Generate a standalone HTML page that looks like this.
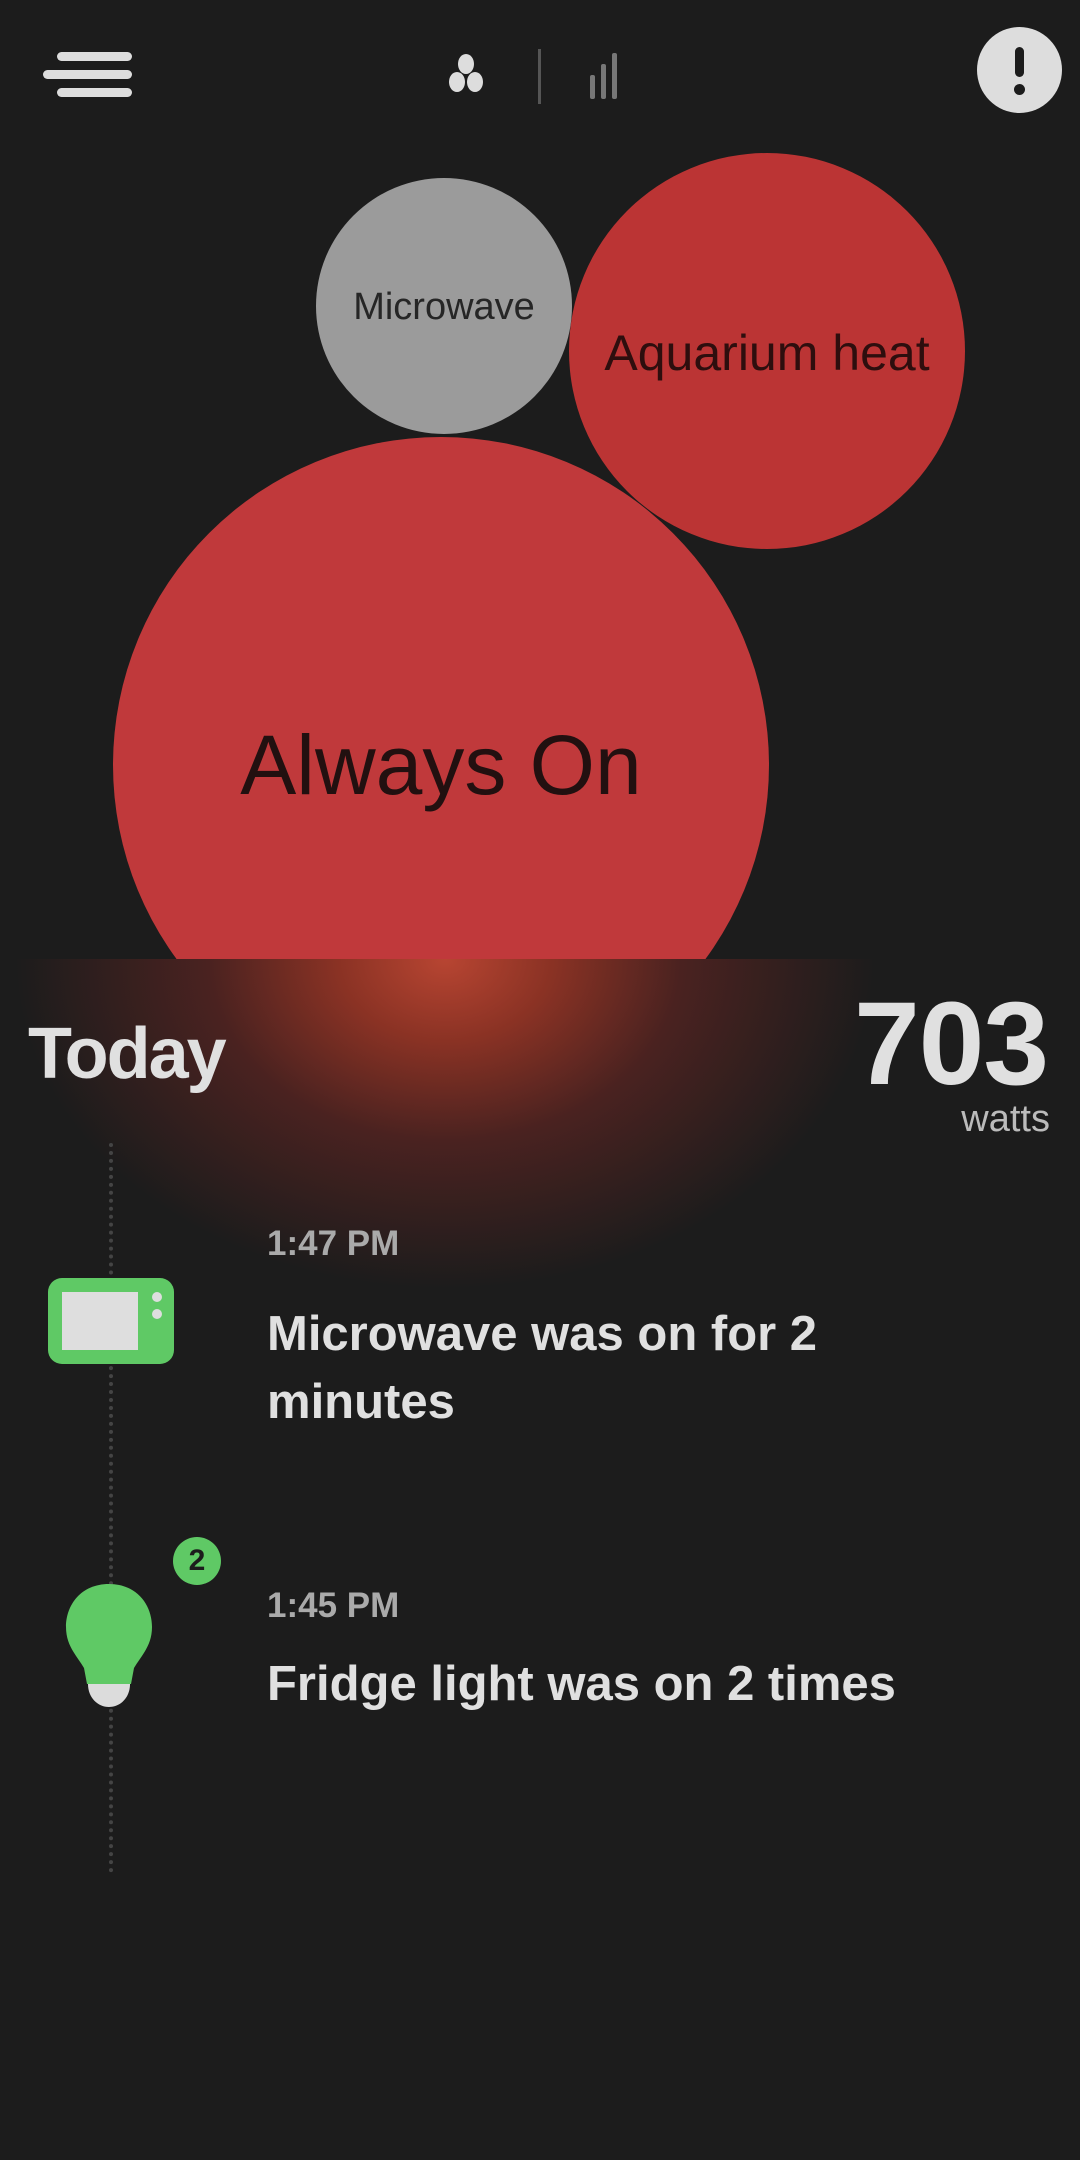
<!DOCTYPE html>
<html><head><meta charset="utf-8"><style>
html,body{margin:0;padding:0;background:#1c1c1c;}
body{width:1080px;height:2160px;position:relative;overflow:hidden;font-family:"Liberation Sans",sans-serif;}
.abs{position:absolute;}
.glow{left:0;top:959px;width:1080px;height:360px;background:radial-gradient(ellipse 430px 330px at 445px 0px,#b84532 0%,#8a3224 25%,#4a2220 55%,rgba(28,28,28,0) 100%);}
.t{color:#e0e0e0;white-space:nowrap;}
</style></head><body>
<div class="abs" style="left:57px;top:52px;width:75px;height:9px;background:#ddd;border-radius:5px"></div>
<div class="abs" style="left:43px;top:70px;width:89px;height:9px;background:#ddd;border-radius:5px"></div>
<div class="abs" style="left:57px;top:88px;width:75px;height:9px;background:#ddd;border-radius:5px"></div>
<svg class="abs" style="left:430px;top:40px" width="220" height="70">
 <ellipse cx="36" cy="24" rx="8" ry="10" fill="#ddd"/>
 <ellipse cx="27" cy="42" rx="8" ry="10" fill="#ddd"/>
 <ellipse cx="45" cy="42" rx="8" ry="10" fill="#ddd"/>
 <rect x="108" y="9" width="3" height="55" fill="#555"/>
 <rect x="160" y="35" width="5" height="24" rx="2" fill="#777"/>
 <rect x="171" y="24" width="5" height="35" rx="2" fill="#777"/>
 <rect x="182" y="13" width="5" height="46" rx="2" fill="#777"/>
</svg>
<div class="abs" style="left:977px;top:27px;width:85px;height:86px;border-radius:50%;background:#ddd"></div>
<div class="abs" style="left:1015px;top:47px;width:9px;height:30px;background:#1c1c1c;border-radius:5px"></div>
<div class="abs" style="left:1014px;top:84px;width:11px;height:11px;background:#1c1c1c;border-radius:50%"></div>
<div class="abs" style="left:316px;top:178px;width:256px;height:256px;border-radius:50%;background:#9b9b9b"></div>
<div class="abs t" style="left:316px;top:286px;width:256px;text-align:center;font-size:38px;color:#262626">Microwave</div>
<div class="abs" style="left:569px;top:153px;width:396px;height:396px;border-radius:50%;background:#bb3434"></div>
<div class="abs t" style="left:569px;top:324px;width:396px;text-align:center;font-size:50px;color:#2e0e0e">Aquarium heat</div>
<div class="abs" style="left:0;top:0;width:1080px;height:959px;overflow:hidden">
 <div class="abs" style="left:113px;top:437px;width:656px;height:656px;border-radius:50%;background:#c0393b"></div>
</div>
<div class="abs t" style="left:113px;top:717px;width:656px;text-align:center;font-size:84px;color:#221010">Always On</div>
<div class="abs glow"></div>
<div class="abs t" style="left:28px;top:1013px;font-size:72px;font-weight:bold;letter-spacing:-2px">Today</div>
<div class="abs t" style="right:32px;top:976px;font-size:118px;font-weight:bold;letter-spacing:-1px">703</div>
<div class="abs t" style="right:30px;top:1098px;font-size:38px;color:#bbb">watts</div>
<div class="abs" style="left:109px;top:1143px;width:0;height:730px;border-left:4px dotted #444"></div>
<div class="abs" style="left:48px;top:1275px;width:126px;height:90px;background:#1c1c1c"></div>
<div class="abs" style="left:48px;top:1278px;width:126px;height:86px;border-radius:14px;background:#5fc965"></div>
<div class="abs" style="left:62px;top:1292px;width:76px;height:58px;background:#dedede"></div>
<div class="abs" style="left:152px;top:1292px;width:10px;height:10px;border-radius:50%;background:#dedede"></div>
<div class="abs" style="left:152px;top:1309px;width:10px;height:10px;border-radius:50%;background:#dedede"></div>
<div class="abs t" style="left:267px;top:1224px;font-size:35px;color:#aaa;font-weight:bold">1:47 PM</div>
<div class="abs t" style="left:267px;top:1300px;font-size:49px;line-height:68px;font-weight:bold">Microwave was on for 2<br>minutes</div>
<div class="abs" style="left:173px;top:1537px;width:48px;height:48px;border-radius:50%;background:#5fc965;color:#1c1c1c;font-weight:bold;font-size:30px;text-align:center;line-height:48px">2</div>
<svg class="abs" style="left:60px;top:1580px" width="100" height="135">
 <path d="M49 4 C21 4 6 25 6 47 C6 66 17 76 24 88 L27 104 L71 104 L74 88 C81 76 92 66 92 47 C92 25 77 4 49 4 Z" fill="#5fc965"/>
 <path d="M28 104 L70 104 C70 118 60 127 49 127 C38 127 28 118 28 104 Z" fill="#dcdcdc"/>
</svg>
<div class="abs t" style="left:267px;top:1586px;font-size:35px;color:#aaa;font-weight:bold">1:45 PM</div>
<div class="abs t" style="left:267px;top:1656px;font-size:49px;font-weight:bold">Fridge light was on 2 times</div>
</body></html>
